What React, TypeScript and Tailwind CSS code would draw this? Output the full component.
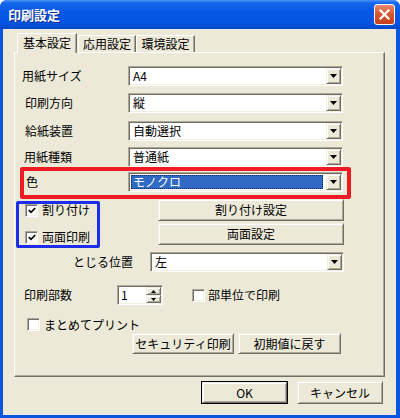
import React from "react";

const sunken =
  "border border-t-[#ACA899] border-l-[#ACA899] border-b-white border-r-white shadow-[inset_1px_1px_0_#716F64,inset_-1px_-1px_0_#F1EFE2]";
const raised =
  "border border-t-[#F1EFE2] border-l-[#F1EFE2] border-b-[#716F64] border-r-[#716F64] shadow-[inset_1px_1px_0_#FFFFFF,inset_-1px_-1px_0_#ACA899]";

const Arrow = ({ up = false }: { up?: boolean }) => (
  <svg width="7" height="4" viewBox="0 0 7 4" className={up ? "rotate-180" : ""}>
    <polygon points="0,0 7,0 3.5,4" fill="#000" />
  </svg>
);

const Combo = ({
  value,
  className,
  selected = false,
}: {
  value: string;
  className: string;
  selected?: boolean;
}) => (
  <div className={`flex h-[20px] bg-white p-[1px] ${sunken} ${className}`}>
    <div className="flex flex-1 items-stretch">
      {selected ? (
        <div className="my-[1px] ml-[1px] mr-[3px] flex flex-1 items-center bg-[#316AC5] pl-[2px] text-white outline-1 outline-dotted outline-[#0B2A6B] -outline-offset-1">
          {value}
        </div>
      ) : (
        <div className="flex flex-1 items-center pl-[3px]">{value}</div>
      )}
    </div>
    <div className={`flex w-[15px] items-center justify-center bg-[#ECE9D8] ${raised}`}>
      <Arrow />
    </div>
  </div>
);

const Check = ({ checked = false }: { checked?: boolean }) => (
  <div className={`flex h-[13px] w-[13px] shrink-0 items-center justify-center bg-white ${sunken}`}>
    {checked && (
      <svg width="8" height="7" viewBox="0 0 8 7">
        <path d="M0.8 3.2 L3 5.4 L7.2 1" stroke="#000" strokeWidth="1.7" fill="none" />
      </svg>
    )}
  </div>
);

const Btn = ({ children, className }: { children: React.ReactNode; className: string }) => (
  <button className={`flex items-center justify-center bg-[#ECE9D8] text-[12px] leading-[14px] text-black ${raised} ${className}`}>
    {children}
  </button>
);

const App = () => {
  return (
    <div className="h-[418px] w-[400px] bg-white font-['Noto_Sans_CJK_JP','Noto_Sans',sans-serif] text-[12px] leading-[14px] text-black">
      <div className="flex h-[418px] w-[400px] flex-col rounded-t-[7px] bg-[#0A56E0]">
        {/* Title bar */}
        <div className="flex h-[29px] items-center justify-between rounded-t-[7px] bg-[linear-gradient(180deg,#4F97F7_0%,#1466EC_10%,#0658E6_40%,#0354E0_80%,#0347CC_100%)] pl-[8px] pr-[5px]">
          <span className="text-[13px] font-bold text-white [text-shadow:1px_1px_0_#0A2A8A]">
            印刷設定
          </span>
          <div className="flex h-[21px] w-[21px] items-center justify-center rounded-[3px] border border-white bg-[linear-gradient(180deg,#E88A6C_0%,#D9552F_50%,#C7401B_100%)]">
            <svg width="11" height="11" viewBox="0 0 11 11">
              <path d="M1.5 1.5 L9.5 9.5 M9.5 1.5 L1.5 9.5" stroke="#fff" strokeWidth="2.2" strokeLinecap="square" />
            </svg>
          </div>
        </div>

        {/* Body */}
        <div className="mb-[3px] ml-[3px] mr-[4px] flex flex-1 flex-col bg-[#ECE9D8] pl-[11px] pt-[4px]">
          {/* Tabs */}
          <div className="ml-[3px] flex h-[19px] items-end">
            <div className="relative z-10 -mb-[1px] flex h-[20px] w-[60px] items-start justify-center rounded-tl-[2px] border-l border-t border-r border-l-white border-t-white border-r-[#716F64] bg-[#ECE9D8] pt-[2px] shadow-[inset_-1px_0_0_#ACA899]">
              基本設定
            </div>
            <div className="ml-[1px] flex h-[17px] w-[58px] items-center justify-center rounded-tl-[2px] border-l border-t border-r border-l-white border-t-white border-r-[#716F64] shadow-[inset_-1px_0_0_#ACA899]">
              応用設定
            </div>
            <div className="flex h-[17px] w-[59px] items-center justify-center rounded-tl-[2px] border-l border-t border-r border-l-white border-t-white border-r-[#716F64] shadow-[inset_-1px_0_0_#ACA899]">
              環境設定
            </div>
          </div>

          {/* Tab panel */}
          <div className="flex h-[325px] w-[371px] flex-col border border-t-white border-l-white border-r-[#716F64] border-b-[#716F64] pl-[7px] pt-[13px] shadow-[inset_-1px_-1px_0_#ACA899]">
            <div className="flex h-[20px] items-center">
              <span className="w-[106px]">用紙サイズ</span>
              <Combo value="A4" className="w-[215px]" />
            </div>
            <div className="mt-[7px] flex h-[20px] items-center">
              <span className="w-[106px] pl-[3px]">印刷方向</span>
              <Combo value="縦" className="w-[215px]" />
            </div>
            <div className="mt-[8px] flex h-[20px] items-center">
              <span className="w-[106px] pl-[3px]">給紙装置</span>
              <Combo value="自動選択" className="w-[215px]" />
            </div>
            <div className="mt-[6px] flex h-[20px] items-center">
              <span className="w-[106px] pl-[2px]">用紙種類</span>
              <Combo value="普通紙" className="w-[215px]" />
            </div>
            <div className="relative mt-[5px] flex h-[20px] items-center">
              <span className="w-[106px] pl-[4px]">色</span>
              <Combo value="モノクロ" className="w-[215px]" selected />
              <div className="absolute left-[-2px] top-[-5px] h-[32px] w-[331px] rounded-[2px] border-[4px] border-[#EE1A24]" />
            </div>

            {/* Checkboxes + setting buttons */}
            <div className="mt-[7px] flex">
              <div className="relative flex w-[136px] flex-col pt-[2px]">
                <div className="flex h-[18px] items-center gap-[4px] pl-[3px]">
                  <Check checked />
                  <span>割り付け</span>
                </div>
                <div className="mt-[9px] flex h-[18px] items-center gap-[4px] pl-[3px]">
                  <Check checked />
                  <span>両面印刷</span>
                </div>
                <div className="absolute left-[-6px] top-[2px] h-[47px] w-[84px] rounded-[2px] border-[3px] border-[#1E2CEB]" />
              </div>
              <div className="flex w-[186px] flex-col gap-[2px]">
                <Btn className="h-[22px] w-[186px]">割り付け設定</Btn>
                <Btn className="h-[22px] w-[186px]">両面設定</Btn>
              </div>
            </div>

            <div className="mt-[6px] flex h-[20px] items-center">
              <span className="ml-[51px] w-[77px]">とじる位置</span>
              <Combo value="左" className="w-[194px]" />
            </div>

            <div className="mt-[13px] flex h-[20px] items-center">
              <span className="w-[95px] pl-[2px]">印刷部数</span>
              <div className={`flex h-[20px] w-[46px] bg-white p-[1px] ${sunken}`}>
                <div className="flex flex-1 items-center pl-[2px]">1</div>
                <div className="flex w-[15px] flex-col">
                  <div className={`flex flex-1 items-center justify-center bg-[#ECE9D8] ${raised}`}>
                    <svg width="5" height="3" viewBox="0 0 5 3">
                      <polygon points="2.5,0 5,3 0,3" fill="#000" />
                    </svg>
                  </div>
                  <div className={`flex flex-1 items-center justify-center bg-[#ECE9D8] ${raised}`}>
                    <svg width="5" height="3" viewBox="0 0 5 3">
                      <polygon points="0,0 5,0 2.5,3" fill="#000" />
                    </svg>
                  </div>
                </div>
              </div>
              <div className="ml-[29px]">
                <Check />
              </div>
              <span className="ml-[3px]">部単位で印刷</span>
            </div>

            <div className="mt-[13px] flex h-[13px] items-center">
              <div className="ml-[5px]">
                <Check />
              </div>
              <span className="ml-[4px]">まとめてプリント</span>
            </div>

            <div className="ml-[110px] mt-[2px] flex gap-[4px]">
              <Btn className="h-[21px] w-[102px]">セキュリティ印刷</Btn>
              <Btn className="h-[21px] w-[103px]">初期値に戻す</Btn>
            </div>
          </div>

          {/* Dialog buttons */}
          <div className="mt-[4px] flex w-[371px] justify-end gap-[9px] pr-[2px]">
            <div className="h-[23px] w-[87px] border border-black">
              <Btn className="h-full w-full">OK</Btn>
            </div>
            <Btn className="h-[23px] w-[86px]">キャンセル</Btn>
          </div>
        </div>
      </div>
    </div>
  );
};

export default App;
